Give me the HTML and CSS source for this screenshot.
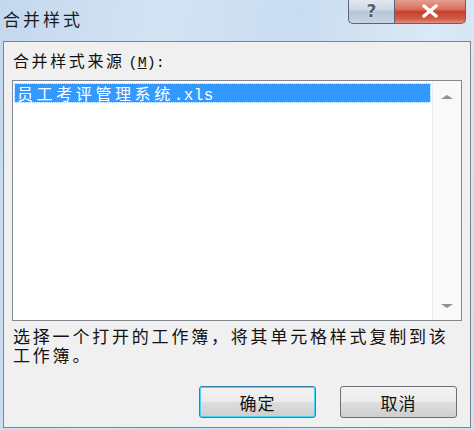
FILE: index.html
```html
<!DOCTYPE html>
<html>
<head>
    <meta charset="utf-8">
    <title>合并样式</title>
    <link rel="stylesheet" href="styles.css">
</head>
<body>

<div class="window">
    <div class="titlebar">
        <span class="title">合并样式</span>
        <div class="caption-buttons">
            <button class="cap-btn help">?</button>
            <button class="cap-btn close">
                <svg width="18" height="14" viewBox="0 0 18 14">
                    <path d="M3 2 L15 12 M15 2 L3 12" stroke="#fff" stroke-width="3.4" stroke-linecap="round"/>
                </svg>
            </button>
        </div>
    </div>

    <div class="client">
        <div class="field-label">合并样式来源<span class="latin">(<u>M</u>):</span></div>

        <div class="listbox">
            <div class="list-items">
                <div class="list-item selected">员工考评管理系统<span class="latin">.xls</span></div>
            </div>
            <div class="scrollbar">
                <span class="arrow up"></span>
                <span class="arrow down"></span>
            </div>
        </div>

        <p class="hint">选择一个打开的工作簿，将其单元格样式复制到该工作簿。</p>

        <div class="actions">
            <button class="btn default">确定</button>
            <button class="btn">取消</button>
        </div>
    </div>
</div>

</body>
</html>
```

FILE: styles.css
```css
/* Dialog window */

html, body {
    margin: 0;
    padding: 0;
}

body {
    width: 474px;
    height: 430px;
    overflow: hidden;
    font-family: "Noto Sans CJK SC", "DejaVu Sans", sans-serif;
    background: #c6d9ee;
}

.window {
    display: flex;
    flex-direction: column;
    height: 430px;
    background: linear-gradient(100deg, #c4d8ee 0%, #d3e3f4 30%, #c9dcf0 55%, #dce9f6 80%, #cfe0f2 100%);
}

.latin {
    font-family: "Liberation Mono", monospace;
    letter-spacing: 0;
}

/* Title bar */

.titlebar {
    display: flex;
    justify-content: space-between;
    align-items: flex-start;
    height: 41px;
    padding-left: 3px;
}

.title {
    margin-top: 8px;
    font-size: 17px;
    letter-spacing: 3px;
    color: #1a1a1a;
    line-height: 22px;
}

.caption-buttons {
    display: flex;
    margin-right: 8px;
    margin-top: -2px;
}

.cap-btn {
    display: flex;
    justify-content: center;
    align-items: center;
    height: 26px;
    padding: 0;
    border: 1px solid #5a6678;
    border-top: none;
    font-family: "DejaVu Sans", sans-serif;
}

.help {
    width: 46px;
    border-radius: 0 0 0 5px;
    border-right: none;
    background: linear-gradient(#e4ebf3 0%, #cfd9e5 45%, #b6c4d4 55%, #c9d5e2 100%);
    color: #55606e;
    font-size: 17px;
    font-weight: bold;
    text-shadow: 0 0 2px #fff;
}

.close {
    width: 72px;
    border-radius: 0 0 5px 0;
    background: linear-gradient(#e9a99c 0%, #d9705e 45%, #c4402a 55%, #d2604a 85%, #e0907e 100%);
}

/* Client area */

.client {
    flex: 1;
    display: flex;
    flex-direction: column;
    margin: 0 3px 2px 3px;
    padding: 8px 8px 0 8px;
    border: 1px solid #7a8696;
    background: #f0f0f0;
}

.field-label {
    font-size: 16px;
    letter-spacing: 2.6px;
    line-height: 20px;
    color: #111;
    margin-left: 1px;
}

.field-label .latin {
    font-size: 15px;
    margin-left: 4px;
}

.listbox {
    display: flex;
    height: 239px;
    margin-top: 6px;
    border: 1px solid #828790;
    background: #fff;
}

.list-items {
    flex: 1;
    padding: 3px 2px 0 2px;
}

.list-item {
    height: 18px;
    line-height: 18px;
    padding-left: 2px;
    font-size: 16px;
    letter-spacing: 3.6px;
    color: #fff;
}

.list-item .latin {
    font-size: 16px;
    letter-spacing: 0.4px;
}

.list-item.selected {
    background: #3399ff;
    outline: 1px dotted #9cc8ff;
}

.scrollbar {
    display: flex;
    flex-direction: column;
    justify-content: space-between;
    align-items: center;
    width: 28px;
    padding: 14px 0 12px 0;
    background: #f9f9f9;
    border-left: 1px solid #ededed;
}

.arrow {
    width: 0;
    height: 0;
    border-left: 6px solid transparent;
    border-right: 6px solid transparent;
}

.arrow.up {
    border-bottom: 4px solid #909090;
}

.arrow.down {
    border-top: 4px solid #909090;
}

.hint {
    margin: 5px 0 0 1px;
    font-size: 17px;
    letter-spacing: 2.8px;
    line-height: 19px;
    color: #111;
}

/* Buttons */

.actions {
    display: flex;
    justify-content: flex-end;
    gap: 24px;
    margin-top: 22px;
    margin-right: 5px;
}

.btn {
    width: 117px;
    height: 32px;
    padding: 0;
    border: 1px solid #707070;
    border-radius: 3px;
    background: linear-gradient(#f2f2f2 0%, #ebebeb 48%, #dddddd 52%, #cfcfcf 100%);
    font-family: "Noto Sans CJK SC", sans-serif;
    font-size: 17px;
    letter-spacing: 1px;
    color: #111;
}

.btn.default {
    border-color: #3c7fb1;
    box-shadow: inset 0 0 0 1px #48d4f5;
}
```
